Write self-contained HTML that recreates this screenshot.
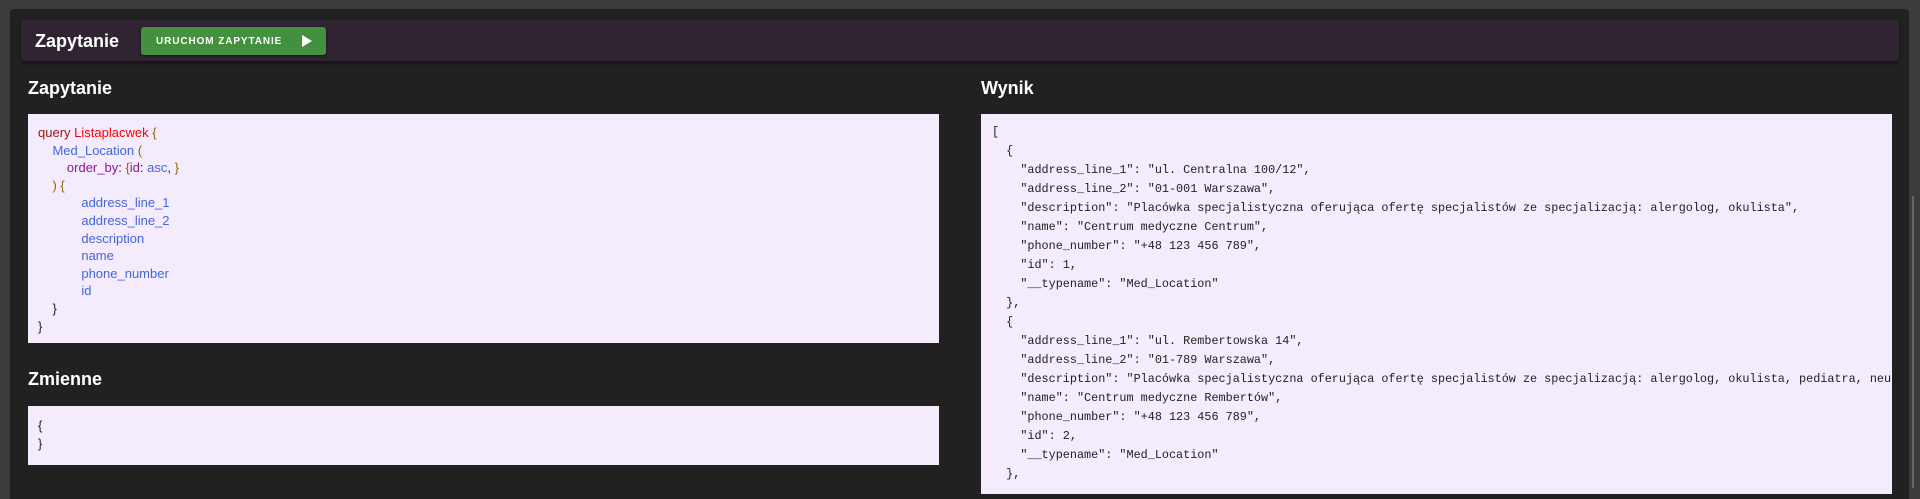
<!DOCTYPE html>
<html><head><meta charset="utf-8"><style>
*{margin:0;padding:0;box-sizing:border-box}
body{width:1920px;height:488px;background:#3c3c3c;overflow:hidden;font-family:"Liberation Sans",sans-serif;position:relative}
.panel{position:absolute;left:10px;top:9px;width:1899px;height:490px;background:#212121;border-radius:4px 4px 0 0}
.hdr{position:absolute;left:21px;top:20px;width:1878px;height:41px;background:#302433;border-radius:4px;box-shadow:0 2px 3px rgba(0,0,0,.5)}
.hdr .t{position:absolute;left:14px;top:11px;color:#fff;font-weight:bold;font-size:18px}
.btn{position:absolute;left:141px;top:27px;width:185px;height:28px;background:#43903f;border-radius:3px;box-shadow:0 1px 3px rgba(0,0,0,.5)}
.btn span{position:absolute;left:15px;top:8.5px;color:#fff;font-weight:bold;font-size:10px;letter-spacing:0.9px}
.btn svg{position:absolute;left:160px;top:8px}
h2{position:absolute;color:#fff;font-size:18px;font-weight:bold}
.box{position:absolute;background:#f4ebfc}
.q{font-size:13px;line-height:17.6px;color:#222;padding:10px 0 0 10px;white-space:pre}
.q div{height:17.6px}
.k{color:#a31515}.n{color:#f00}.f{color:#4466dd}.p{color:#8b1a8b}.b{color:#8a6a00}
.m{font-family:"Liberation Mono",monospace;font-size:11.8px;line-height:19px;color:#222;white-space:pre;padding:9px 0 0 11px}
.sb{position:absolute;left:1912px;top:196px;width:2px;height:292px;background:#666}
</style></head><body>
<div class="panel"></div>
<div class="hdr"><div class="t">Zapytanie</div></div>
<div class="btn"><span>URUCHOM ZAPYTANIE</span><svg width="12" height="12" viewBox="0 0 12 12"><path d="M1 0L11 6L1 12Z" fill="#fff"/></svg></div>
<h2 style="left:28px;top:78px">Zapytanie</h2>
<div class="box q" style="left:28px;top:114px;width:911px;height:229px"><div><span class="k">query</span> <span class="n">Listaplacwek</span> <span class="b">{</span></div><div>    <span class="f">Med_Location</span> <span class="b">(</span></div><div>        <span class="p">order_by</span>: <span class="b">{</span><span class="p">id</span>: <span class="f">asc</span>, <span class="b">}</span></div><div>    <span class="b">) {</span></div><div class="f">            address_line_1</div><div class="f">            address_line_2</div><div class="f">            description</div><div class="f">            name</div><div class="f">            phone_number</div><div class="f">            id</div><div>    }</div><div>}</div></div>
<h2 style="left:28px;top:369px">Zmienne</h2>
<div class="box q" style="left:28px;top:406px;width:911px;height:59px;padding-top:11px">{
}</div>
<h2 style="left:981px;top:78px">Wynik</h2>
<div class="box m" style="left:981px;top:114px;width:911px;height:380px;overflow:hidden">[
  {
    "address_line_1": "ul. Centralna 100/12",
    "address_line_2": "01-001 Warszawa",
    "description": "Placówka specjalistyczna oferująca ofertę specjalistów ze specjalizacją: alergolog, okulista",
    "name": "Centrum medyczne Centrum",
    "phone_number": "+48 123 456 789",
    "id": 1,
    "__typename": "Med_Location"
  },
  {
    "address_line_1": "ul. Rembertowska 14",
    "address_line_2": "01-789 Warszawa",
    "description": "Placówka specjalistyczna oferująca ofertę specjalistów ze specjalizacją: alergolog, okulista, pediatra, neurolog",
    "name": "Centrum medyczne Rembertów",
    "phone_number": "+48 123 456 789",
    "id": 2,
    "__typename": "Med_Location"
  },
</div>
<div class="sb"></div>
</body></html>
